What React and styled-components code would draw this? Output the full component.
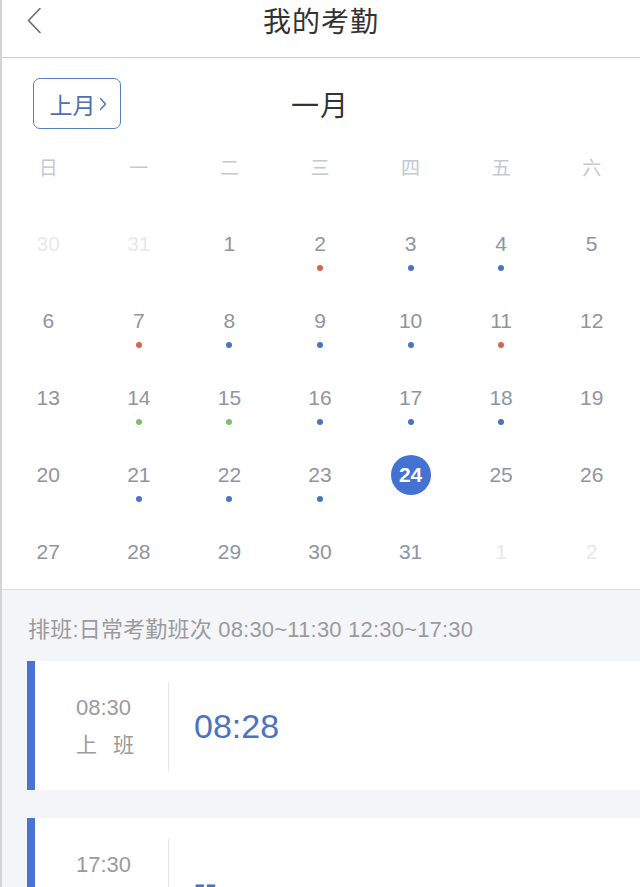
import React from "react";
import styled, { createGlobalStyle } from "styled-components";

const GlobalStyle = createGlobalStyle`
  html, body { margin: 0; padding: 0; background: #f4f5f8; }
  body {
    font-family: "Liberation Sans", "Noto Sans CJK SC", sans-serif;
    -webkit-font-smoothing: antialiased;
  }
  * { box-sizing: border-box; }
`;

const Page = styled.div`
  width: 640px;
  min-height: 887px;
  border-left: 2px solid #d4d4d6;
  background: #f4f5f8;
  overflow: hidden;
`;

const Header = styled.header`
  position: relative;
  height: 58px;
  background: #fff;
  border-bottom: 1px solid #cfcfd2;
  display: flex;
  align-items: center;
  justify-content: center;
  padding-bottom: 17px;
`;

const BackButton = styled.button`
  position: absolute;
  left: 20px;
  top: 5px;
  width: 24px;
  height: 30px;
  border: 0;
  padding: 0;
  background: transparent;
  display: flex;
  align-items: center;
  justify-content: center;
`;

const Title = styled.h1`
  margin: 0;
  font-size: 28px;
  font-weight: 400;
  color: #333;
  letter-spacing: 1px;
`;

const Calendar = styled.section`
  background: #fff;
  padding-top: 20px;
  border-bottom: 1px solid #dcdde2;
`;

const MonthBar = styled.div`
  display: grid;
  grid-template-columns: 1fr auto 1fr;
  align-items: center;
  height: 51px;
`;

const PrevButton = styled.button`
  justify-self: start;
  margin-left: 31px;
  width: 88px;
  height: 51px;
  border: 1.5px solid #5a7fc0;
  border-radius: 7px;
  background: #fff;
  color: #4d70b3;
  font-family: "Liberation Sans", "Noto Sans CJK SC", sans-serif;
  font-size: 23px;
  display: flex;
  align-items: center;
  justify-content: center;
  gap: 3px;
  padding: 0 0 0 2px;
`;

const MonthLabel = styled.div`
  font-size: 28px;
  color: #333;
  letter-spacing: 1px;
  margin-left: -2px;
`;

const Grid = styled.div`
  display: grid;
  grid-template-columns: repeat(7, 1fr);
  padding: 0 3px 0 1px;
`;

const WeekRow = styled(Grid)`
  margin-top: 17px;
  height: 40px;
  align-items: center;
`;

const WeekDay = styled.div`
  text-align: center;
  font-size: 19px;
  color: #c5c8cf;
`;

const DateGrid = styled(Grid)`
  margin-top: 18px;
  grid-auto-rows: 77px;
`;

const Cell = styled.div`
  display: flex;
  flex-direction: column;
  align-items: center;
  padding-top: 20px;
`;

const DayNum = styled.div`
  width: 40px;
  height: 40px;
  border-radius: 50%;
  display: flex;
  align-items: center;
  justify-content: center;
  font-size: 21px;
  color: ${(p) => (p.$selected ? "#fff" : p.$faded ? "#e7e8ec" : "#8f94a0")};
  background: ${(p) => (p.$selected ? "#4472d2" : "transparent")};
  font-weight: ${(p) => (p.$selected ? 700 : 400)};
`;

const Dot = styled.span`
  width: 6px;
  height: 6px;
  margin-top: 1px;
  border-radius: 50%;
  background: ${(p) => p.$color};
`;

const Schedule = styled.section`
  padding: 27px 0 0 25px;
`;

const ScheduleText = styled.div`
  font-size: 22px;
  line-height: 26px;
  color: #9b9b9d;
  margin-left: 1px;
  margin-bottom: 18px;
  white-space: nowrap;
  letter-spacing: 0.2px;
`;

const Card = styled.div`
  display: flex;
  height: 129px;
  background: #fff;
  border-left: 8px solid #4874d0;
  margin-bottom: 28px;
`;

const TimeCol = styled.div`
  width: 133px;
  display: flex;
  flex-direction: column;
  justify-content: center;
  padding-left: 41px;
  gap: 7px;
  padding-top: 2px;
  align-self: center;
`;

const Planned = styled.div`
  font-size: 22px;
  line-height: 30px;
  color: #9b9b9b;
  width: 58px;
`;

const Label = styled.div`
  font-size: 21px;
  line-height: 30px;
  color: #9b9b9b;
  width: 58px;
  display: flex;
  justify-content: space-between;
`;

const Divider = styled.div`
  width: 1px;
  background: #e6e6e8;
  margin: 21px 0 18px;
`;

const Actual = styled.div`
  padding-left: 25px;
  display: flex;
  align-items: center;
  font-size: 34px;
  color: #4a73c1;
  padding-top: 2px;
`;

const BLUE = "#4b73c3";
const RED = "#d9644f";
const GREEN = "#7cbf6a";

const weekDays = ["日", "一", "二", "三", "四", "五", "六"];

const dots = {
  2: RED, 3: BLUE, 4: BLUE,
  7: RED, 8: BLUE, 9: BLUE, 10: BLUE, 11: RED,
  14: GREEN, 15: GREEN, 16: BLUE, 17: BLUE, 18: BLUE,
  21: BLUE, 22: BLUE, 23: BLUE,
};

const days = [
  { n: 30, faded: true },
  { n: 31, faded: true },
  ...Array.from({ length: 31 }, (_, i) => ({ n: i + 1 })),
  { n: 1, faded: true },
  { n: 2, faded: true },
];

const ChevronLeft = () => (
  <svg width="16" height="27" viewBox="0 0 16 27" fill="none">
    <path d="M14 1.5 L2.5 13.5 L14 25.5" stroke="#6a6a6a" strokeWidth="1.6" strokeLinecap="round" strokeLinejoin="round" />
  </svg>
);

const ChevronRight = () => (
  <svg width="8" height="14" viewBox="0 0 8 14" fill="none">
    <path d="M1.5 1.5 L6.5 7 L1.5 12.5" stroke="#4d70b3" strokeWidth="1.3" strokeLinecap="round" strokeLinejoin="round" />
  </svg>
);

const records = [
  { plan: "08:30", label: ["上", "班"], actual: "08:28" },
  { plan: "17:30", label: ["下", "班"], actual: "--" },
];

export default function App() {
  return (
    <>
      <GlobalStyle />
      <Page>
        <Header>
          <BackButton aria-label="返回">
            <ChevronLeft />
          </BackButton>
          <Title>我的考勤</Title>
        </Header>
        <Calendar>
          <MonthBar>
            <PrevButton>
              上月
              <ChevronRight />
            </PrevButton>
            <MonthLabel>一月</MonthLabel>
            <div />
          </MonthBar>
          <WeekRow>
            {weekDays.map((d) => (
              <WeekDay key={d}>{d}</WeekDay>
            ))}
          </WeekRow>
          <DateGrid>
            {days.map((d, i) => {
              const selected = !d.faded && d.n === 24;
              const color = !d.faded && dots[d.n];
              return (
                <Cell key={i}>
                  <DayNum $faded={d.faded} $selected={selected}>
                    {d.n}
                  </DayNum>
                  {color && <Dot $color={color} />}
                </Cell>
              );
            })}
          </DateGrid>
        </Calendar>
        <Schedule>
          <ScheduleText>排班:日常考勤班次 08:30~11:30 12:30~17:30</ScheduleText>
          {records.map((r) => (
            <Card key={r.plan}>
              <TimeCol>
                <Planned>{r.plan}</Planned>
                <Label>
                  <span>{r.label[0]}</span>
                  <span>{r.label[1]}</span>
                </Label>
              </TimeCol>
              <Divider />
              <Actual>{r.actual}</Actual>
            </Card>
          ))}
        </Schedule>
      </Page>
    </>
  );
}
